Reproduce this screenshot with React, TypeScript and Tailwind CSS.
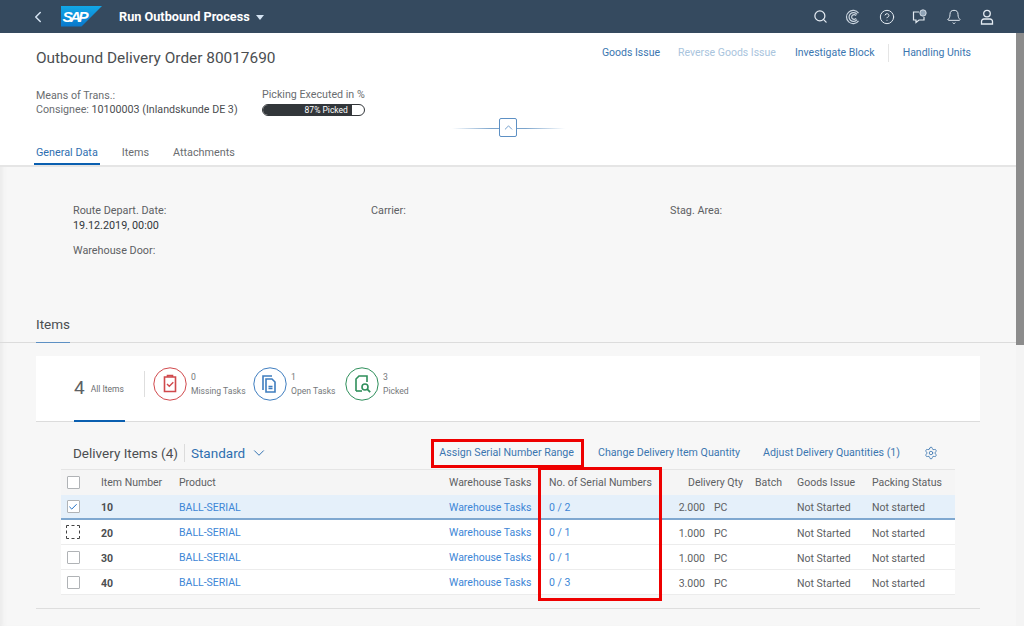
import React from "react";
import { ChevronLeft, ChevronDown, ChevronUp, Search, CircleHelp, Bell, Settings, Check } from "lucide-react";

const rows = [
  { n: "10", s: "0 / 2", q: "2.000", sel: true },
  { n: "20", s: "0 / 1", q: "1.000", focus: true },
  { n: "30", s: "0 / 1", q: "1.000" },
  { n: "40", s: "0 / 3", q: "3.000" },
];

const grid = "grid grid-cols-[40px_78px_270px_100px_116px_90px_42px_75px_83px] items-center";

function Box({ checked, focus }: { checked?: boolean; focus?: boolean }) {
  return (
    <div className="flex justify-center pr-[16px]">
      <div
        className={
          "flex items-center justify-center rounded-[1px] border bg-white " +
          (focus ? "h-[14px] w-[14px] border-dashed border-[#444]" : "h-[13px] w-[13px] border-[#b0b3b6]")
        }
      >
        {checked && <Check size={10} strokeWidth={2.4} className="text-[#1f6fc4]" />}
      </div>
    </div>
  );
}

function Tile({ color, label, value, children, gap }: { color: string; label: string; value: string; children: React.ReactNode; gap: string }) {
  return (
    <div className={"-mt-[10px] flex items-center " + gap}>
      <svg width="34" height="34" viewBox="0 0 34 34" fill="none" stroke={color} className="shrink-0">
        <circle cx="17" cy="17" r="16.2" strokeWidth="1" />
        {children}
      </svg>
      <div className="ml-[4px] flex flex-col whitespace-nowrap pt-[1px] text-[8.6px] leading-[14px] text-[#74777a]">
        <span>{value}</span>
        <span>{label}</span>
      </div>
    </div>
  );
}

function Field({ label, value, className }: { label: string; value?: string; className?: string }) {
  return (
    <div className={"text-[10.8px] leading-[15px] text-[#5d6063] " + (className ?? "")}>
      <div>{label}</div>
      {value && <div className="text-[#32363a]">{value}</div>}
    </div>
  );
}

export default function App() {
  return (
    <div className="relative flex h-[626px] w-[1024px] flex-col overflow-hidden bg-[#f7f7f7] font-['Roboto','Open_Sans',sans-serif] text-[10.5px] text-[#32363a]">
      {/* Shell bar */}
      <header className="flex h-[33px] shrink-0 items-center bg-[#354a5f] text-white shadow-[0_1px_0_#c3ccd5]">
        <ChevronLeft size={18} strokeWidth={2} className="ml-[29px] text-[#d5e3f2]" />
        <svg width="41" height="21" viewBox="0 0 41 21" className="ml-[14px]">
          <defs>
            <linearGradient id="sapg" x1="0" y1="0" x2="0" y2="1">
              <stop offset="0" stopColor="#12a8e8" />
              <stop offset="1" stopColor="#0a78cc" />
            </linearGradient>
          </defs>
          <polygon points="0,0 41,0 20.5,20.5 0,20.5" fill="url(#sapg)" />
          <text x="1.5" y="15.5" fontSize="15.5" fontWeight="700" fontStyle="italic" fontFamily="Liberation Sans, sans-serif" fill="#fff" textLength="26">SAP</text>
        </svg>
        <span className="ml-[17px] text-[12.7px] font-bold">Run Outbound Process</span>
        <span className="ml-[6px] mt-[1px] h-0 w-0 border-x-[4px] border-t-[5px] border-x-transparent border-t-[#d5e3f2]" />
        <div className="ml-auto mr-[29px] flex items-center gap-[17.5px] text-[#e4ebf2]">
          <Search size={15} strokeWidth={2} />
          <svg width="16" height="16" viewBox="0 0 16 16" fill="none" stroke="#c9d4df" strokeWidth="1.2">
            <path d="M13.5 4.2A6.6 6.6 0 1 0 13.5 11.8" />
            <path d="M12 5.4A4.4 4.4 0 1 0 12 10.6" />
            <path d="M11 6.6a2.4 2.4 0 1 0 0 2.8" />
          </svg>
          <CircleHelp size={16} strokeWidth={1.5} />
          <svg width="16" height="16" viewBox="0 0 16 16" fill="none" stroke="#e4ebf2" strokeWidth="1.2">
            <path d="M7 3H1.5v8H4v2.5L7 11h5V8" />
            <circle cx="11" cy="4" r="3.2" fill="#8fa3b6" strokeWidth="0.8" />
          </svg>
          <Bell size={16} strokeWidth={1.5} />
          <svg width="16" height="16" viewBox="0 0 16 16" fill="none" stroke="#e4ebf2" strokeWidth="1.3">
            <circle cx="8" cy="4.6" r="3.3" />
            <path d="M2.5 15v-2.6A2.4 2.4 0 0 1 5 10h6a2.4 2.4 0 0 1 2.5 2.4V15z" />
          </svg>
        </div>
      </header>

      <div className="flex min-h-0 flex-1">
        <main className="min-w-0 flex-1 shadow-[inset_6px_0_6px_-5px_#e4e4e4]">
          {/* Object header */}
          <section className="relative h-[134px] border-b-2 border-[#e5e5e5] bg-white">
            <div className="flex items-start justify-between pl-[36px] pr-[45px] pt-[14px]">
              <h1 className="text-[15.4px] leading-[22px] text-[#4b4e51]">Outbound Delivery Order 80017690</h1>
              <div className="-mt-[3px] flex items-center text-[#3b76b0]">
                <span>Goods Issue</span>
                <span className="ml-[18px] text-[#a9c4dd]">Reverse Goods Issue</span>
                <span className="ml-[19px]">Investigate Block</span>
                <span className="ml-[13px] h-[18px] w-px bg-[#e5e5e5]" />
                <span className="ml-[14px]">Handling Units</span>
              </div>
            </div>
            <div className="mt-[19px] flex pl-[36px] text-[10.7px]">
              <div className="w-[226px] pt-[1px] leading-[14px] text-[#6a6d70]">
                <div>Means of Trans.:</div>
                <div>Consignee: <span className="text-[#4b4e51]">10100003 (Inlandskunde DE 3)</span></div>
              </div>
              <div className="w-[103px]">
                <div className="whitespace-nowrap leading-[13px] text-[#6a6d70]">Picking Executed in %</div>
                <div className="mt-[3px] h-[12px] overflow-hidden rounded-full border border-[#32363a] bg-white">
                  <div className="flex h-full w-[88%] items-center justify-end bg-[#32363a] pr-[4px] text-[8.5px] leading-none text-white">87% Picked</div>
                </div>
              </div>
            </div>
            {/* header collapse control */}
            <div className="absolute left-[452px] top-[95px] h-px w-[113px] bg-[linear-gradient(90deg,transparent,#7ba4cc_35%,#7ba4cc_65%,transparent)]" />
            <div className="absolute left-[499px] top-[85px] flex h-[19px] w-[18px] items-center justify-center rounded-[2px] border border-[#5d90c4] bg-white">
              <ChevronUp size={13} strokeWidth={1.6} className="text-[#5d90c4]" />
            </div>
            <nav className="absolute bottom-0 left-[34px] flex text-[10.8px] text-[#6a6d70]">
              <span className="border-b-2 border-[#0a5fb0] px-[2px] pb-[2px] text-[#2f6fb0]">General Data</span>
              <span className="ml-[22px]">Items</span>
              <span className="ml-[24px]">Attachments</span>
            </nav>
          </section>

          {/* General data */}
          <section className="h-[141px] pl-[73px] pt-[36px]">
            <div className="flex">
              <Field label="Route Depart. Date:" value="19.12.2019, 00:00" className="w-[298px]" />
              <Field label="Carrier:" className="w-[299px]" />
              <Field label="Stag. Area:" />
            </div>
            <Field label="Warehouse Door:" className="mt-[10px]" />
          </section>

          {/* Items */}
          <section className="px-[36px]">
            <div className="-mx-[36px] border-b border-[#dcdcdc] px-[36px]">
              <h2 className="mb-[-1px] h-[35px] w-[34px] whitespace-nowrap border-b border-[#5d90c4] pt-[7px] text-[13.5px] leading-[18px] text-[#4b4e51]">Items</h2>
            </div>
            <div className="mt-[13px] flex h-[66px] w-[944px] items-center border-b border-[#dcdcdc] bg-white pl-[38px]">
              <div className="relative flex h-full w-[51px] items-center">
                <span className="text-[19px] text-[#5d6063]">4</span>
                <span className="ml-[6px] pt-[2px] text-[8.5px] text-[#6a6d70]">All Items</span>
                <span className="absolute bottom-[-1px] left-0 right-0 h-[2px] bg-[#0a5fb0]" />
              </div>
              <span className="-mt-[10px] ml-[19px] h-[26px] w-px bg-[#dedede]" />
              <Tile color="#d0494c" value="0" label="Missing Tasks" gap="ml-[8px] w-[100px]">
                <path d="M11.5 10h11v14.5h-11z" strokeWidth="1.6" />
                <path d="M14.5 10V8.6h5V10" strokeWidth="1.6" />
                <path d="M14 17l2.3 2.3 4-4" strokeWidth="1.4" />
              </Tile>
              <Tile color="#3f7dbf" value="1" label="Open Tasks" gap="w-[92px]">
                <path d="M10 23V9h9" strokeWidth="1.6" />
                <path d="M13 12h6l3 3v10h-9z" strokeWidth="1.6" />
                <path d="M15.5 19.5h4M15.5 21.5h4" strokeWidth="1.4" />
              </Tile>
              <Tile color="#2f8f5b" value="3" label="Picked" gap="">
                <path d="M11 24V12l3-3h8v6" strokeWidth="1.6" />
                <path d="M11 24h6" strokeWidth="1.6" />
                <circle cx="20" cy="20" r="3" strokeWidth="1.6" />
                <path d="M22.2 22.2l3 3" strokeWidth="1.8" />
              </Tile>
            </div>

            <div className="flex h-[47px] items-center pl-[37px] pr-[42px] pt-[15px]">
              <span className="text-[13.5px] text-[#4b4e51]">Delivery Items (4)</span>
              <span className="ml-[6px] h-[18px] w-px bg-[#dcdcdc]" />
              <span className="ml-[6px] text-[13.5px] text-[#2f6fb0]">Standard</span>
              <ChevronDown size={18} strokeWidth={1.3} className="ml-[5px] text-[#2f6fb0]" />
              <div className="ml-auto flex items-center text-[10.65px] text-[#3b76b0]">
                <span>Assign Serial Number Range</span>
                <span className="ml-[24px]">Change Delivery Item Quantity</span>
                <span className="ml-[23px]">Adjust Delivery Quantities (1)</span>
                <Settings size={14} strokeWidth={1.4} className="ml-[24px]" />
              </div>
            </div>

            <div className="ml-[25px] w-[894px] bg-white">
              <div className={grid + " h-[26px] border-t border-[#e5e5e5] bg-[#f5f5f5] text-[#5d6063]"}>
                <Box />
                <span className="pt-[1px]">Item Number</span>
                <span className="pt-[1px]">Product</span>
                <span className="pt-[1px]">Warehouse Tasks</span>
                <span className="pt-[1px]">No. of Serial Numbers</span>
                <span className="pr-[12px] pt-[1px] text-right">Delivery Qty</span>
                <span className="pt-[1px]">Batch</span>
                <span className="pt-[1px]">Goods Issue</span>
                <span className="pt-[1px]">Packing Status</span>
              </div>
              {rows.map((r) => (
                <div
                  key={r.n}
                  className={grid + " h-[25px] " + (r.sel ? "border-b-2 border-[#7fa8d0] bg-[#e5f0fa]" : "border-b border-[#ececec]")}
                >
                  <Box checked={r.sel} focus={r.focus} />
                  <span className="pt-[3px] font-bold text-[#4b4e51]">{r.n}</span>
                  <span className="pt-[2px] text-[#3d86d6]">BALL-SERIAL</span>
                  <span className="pt-[2px] text-[#3d86d6]">Warehouse Tasks</span>
                  <span className="pt-[2px] text-[#3d86d6]">{r.s}</span>
                  <div className="flex pt-[3px] text-[#5d6063]">
                    <span className="w-[40px] text-right">{r.q}</span>
                    <span className="ml-[9px]">PC</span>
                  </div>
                  <span />
                  <span className="pt-[3px] text-[#5d6063]">Not Started</span>
                  <span className="pt-[3px] text-[#5d6063]">Not started</span>
                </div>
              ))}
            </div>
            <div className="mt-[13px] h-px w-[944px] bg-[#dedede]" />
          </section>
        </main>

        {/* Scrollbar */}
        <div className="w-[8px] shrink-0 bg-[#f4f4f4]">
          <div className="h-[312px] bg-[#8c8c8c]" />
        </div>
      </div>

      {/* Red annotation boxes */}
      <div className="absolute left-[431px] top-[439px] h-[29px] w-[153px] border-[3px] border-[#ee0000]" />
      <div className="absolute left-[538px] top-[467px] h-[134px] w-[124px] border-[3px] border-[#ee0000]" />
    </div>
  );
}
